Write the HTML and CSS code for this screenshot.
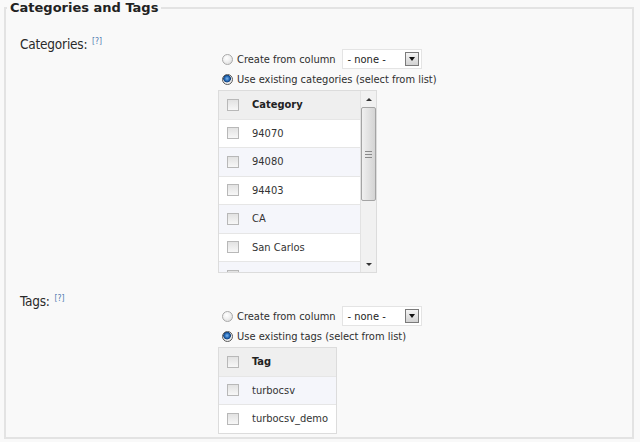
FILE: index.html
```
<!DOCTYPE html>
<html>
<head>
<meta charset="utf-8">
<link rel="stylesheet" href="styles.css">
</head>
<body>
<fieldset class="group">
  <legend class="group-title">Categories and Tags</legend>

  <div class="field">
    <div class="field-label">Categories: <sup class="help">[?]</sup></div>
    <div class="choices">
      <div class="opt">
        <span class="radio"></span>
        <span class="opt-text">Create from column</span>
        <span class="select"><span class="select-value">- none -</span><span class="select-btn"><span class="tri-down"></span></span></span>
      </div>
      <div class="opt opt-second">
        <span class="radio on"></span>
        <span class="opt-text">Use existing categories (select from list)</span>
      </div>
      <div class="listbox cats">
        <div class="list">
          <div class="row head"><span class="cb"></span><span>Category</span></div>
          <div class="row"><span class="cb"></span><span>94070</span></div>
          <div class="row alt"><span class="cb"></span><span>94080</span></div>
          <div class="row"><span class="cb"></span><span>94403</span></div>
          <div class="row alt"><span class="cb"></span><span>CA</span></div>
          <div class="row"><span class="cb"></span><span>San Carlos</span></div>
          <div class="row alt"><span class="cb"></span></div>
        </div>
        <div class="scrollbar">
          <div class="sb-btn"><span class="arrow-up"></span></div>
          <div class="sb-thumb"><span class="grip"></span><span class="grip"></span><span class="grip"></span></div>
          <div class="sb-track"></div>
          <div class="sb-btn"><span class="arrow-down"></span></div>
        </div>
      </div>
    </div>
  </div>

  <div class="field field-tags">
    <div class="field-label">Tags: <sup class="help">[?]</sup></div>
    <div class="choices">
      <div class="opt">
        <span class="radio"></span>
        <span class="opt-text">Create from column</span>
        <span class="select"><span class="select-value">- none -</span><span class="select-btn"><span class="tri-down"></span></span></span>
      </div>
      <div class="opt opt-second">
        <span class="radio on"></span>
        <span class="opt-text">Use existing tags (select from list)</span>
      </div>
      <div class="listbox tags">
        <div class="list">
          <div class="row head"><span class="cb"></span><span>Tag</span></div>
          <div class="row alt"><span class="cb"></span><span>turbocsv</span></div>
          <div class="row last"><span class="cb"></span><span>turbocsv_demo</span></div>
        </div>
      </div>
    </div>
  </div>
</fieldset>
</body>
</html>
```
FILE: styles.css
```
html, body {
  margin: 0;
  padding: 0;
  background: #f9f9f9;
}
body {
  font-family: "DejaVu Sans Condensed", "DejaVu Sans", sans-serif;
  font-stretch: condensed;
  color: #333;
}
.group {
  margin: 0 6px 0 4px;
  padding: 0 0 3px 0;
  border: 2px solid #e3e3e3;
  min-width: 0;
}
.group-title {
  font-family: "DejaVu Sans", sans-serif;
  font-stretch: normal;
  font-size: 13px;
  line-height: 15px;
  font-weight: bold;
  color: #222;
  padding: 0 3px;
  margin-left: 1px;
}
.field {
  padding-left: 14px;
}
.field-label {
  font-size: 13.5px;
  letter-spacing: -0.2px;
  line-height: 12px;
  margin-top: 22px;
  color: #2a2a2a;
}
.field-tags .field-label {
  margin-top: 21px;
}
.help {
  font-size: 8.5px;
  letter-spacing: 0;
  line-height: 8px;
  color: #4f79b0;
  vertical-align: 5px;
  margin-left: 1px;
}
.choices {
  margin-left: 198px;
  margin-top: -1px;
}
.opt {
  display: flex;
  align-items: center;
  height: 20px;
  font-size: 11px;
  color: #2e2e2e;
  white-space: nowrap;
}
.opt-second {
  height: 21px;
}
.radio {
  width: 11px;
  height: 11px;
  box-sizing: border-box;
  border-radius: 50%;
  border: 1px solid #a9a9a9;
  background: radial-gradient(circle at 40% 35%, #ffffff 0%, #f2f2f2 40%, #d6d6d6 100%);
  margin: 0 4px 0 4px;
  flex: none;
}
.radio.on {
  border-color: #5a5a5a;
  background: radial-gradient(circle at 45% 40%, #7fb7ee 0%, #1f63b0 35%, #123f78 48%, #e9e9e9 56%, #f7f7f7 100%);
}
.select {
  display: flex;
  align-items: center;
  justify-content: space-between;
  box-sizing: border-box;
  width: 80px;
  height: 20px;
  margin-left: 6px;
  padding: 0 2px 0 5px;
  background: #fff;
  border: 1px solid #e4e4e4;
  color: #222;
}
.select-btn {
  display: flex;
  align-items: center;
  justify-content: center;
  box-sizing: border-box;
  width: 14px;
  height: 14px;
  border: 1px solid #7a7a7a;
  background: linear-gradient(#f4f4f4, #d2d2d2);
}
.tri-down {
  width: 0;
  height: 0;
  border-left: 3px solid transparent;
  border-right: 3px solid transparent;
  border-top: 4px solid #111;
}
.listbox {
  display: flex;
  box-sizing: border-box;
  border: 1px solid #dcdcdc;
  background: #fff;
}
.cats {
  width: 159px;
  height: 183px;
  overflow: hidden;
}
.tags {
  width: 119px;
}
.list {
  flex: 1;
  min-width: 0;
}
.row {
  display: flex;
  align-items: center;
  height: 27.5px;
  border-bottom: 1px solid #e6e6e6;
  font-size: 11px;
  color: #333;
  background: #fff;
  white-space: nowrap;
}
.row.last {
  border-bottom: 0;
}
.row.head {
  background: #efefef;
  font-weight: bold;
  color: #222;
}
.row.alt {
  background: #f5f6fb;
}
.cb {
  flex: none;
  width: 12px;
  height: 12px;
  box-sizing: border-box;
  border: 1px solid #b8b8b8;
  background: linear-gradient(#e2e2e2, #f7f7f7);
  margin: 0 13px 0 8px;
}
.scrollbar {
  flex: none;
  width: 15px;
  display: flex;
  flex-direction: column;
  background: #f1f1f1;
  border-left: 1px solid #e2e2e2;
}
.sb-btn {
  height: 16px;
  display: flex;
  align-items: center;
  justify-content: center;
}
.arrow-up {
  width: 0;
  height: 0;
  border-left: 3px solid transparent;
  border-right: 3px solid transparent;
  border-bottom: 3px solid #333;
}
.arrow-down {
  width: 0;
  height: 0;
  border-left: 3px solid transparent;
  border-right: 3px solid transparent;
  border-top: 3px solid #333;
}
.sb-thumb {
  height: 94px;
  box-sizing: border-box;
  border: 1px solid #a4a4a4;
  border-radius: 2px;
  background: linear-gradient(to right, #f0f0f0, #d4d4d4);
  display: flex;
  flex-direction: column;
  align-items: center;
  justify-content: center;
  gap: 2px;
}
.grip {
  width: 7px;
  height: 1px;
  background: #8a8a8a;
}
.sb-track {
  flex: 1;
}
```
